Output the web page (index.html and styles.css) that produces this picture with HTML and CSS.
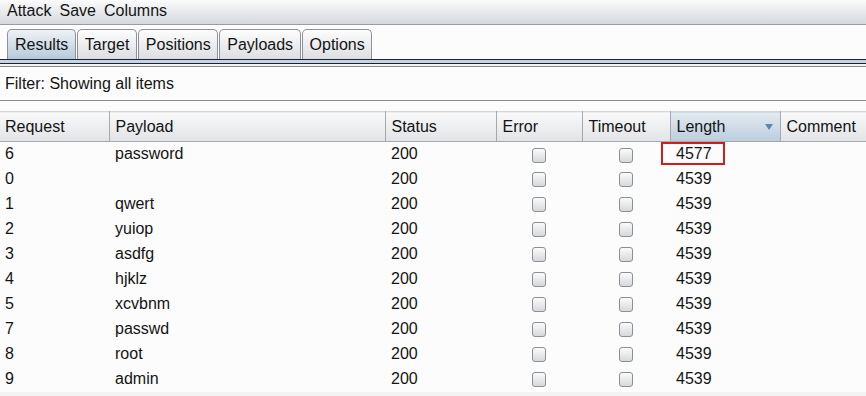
FILE: index.html
```html
<!DOCTYPE html>
<html lang="en">
<head>
    <meta charset="UTF-8">
    <title>Intruder attack - Results</title>
    <link rel="stylesheet" href="styles.css">
</head>
<body>
    <div id="menubar">
        <span class="menu-item">Attack</span>
        <span class="menu-item">Save</span>
        <span class="menu-item">Columns</span>
    </div>

    <div id="tab-area">
        <div id="tabs">
            <div class="tab selected">Results</div>
            <div class="tab">Target</div>
            <div class="tab">Positions</div>
            <div class="tab">Payloads</div>
            <div class="tab">Options</div>
        </div>
        <div id="tab-rule"></div>
    </div>

    <div id="filter">Filter: Showing all items</div>

    <div id="table-area">
        <table class="results">
            <colgroup>
                <col style="width: 109px">
                <col style="width: 276px">
                <col style="width: 111px">
                <col style="width: 86px">
                <col style="width: 88px">
                <col style="width: 110px">
                <col>
            </colgroup>
            <thead>
                <tr>
                    <th>Request</th>
                    <th>Payload</th>
                    <th>Status</th>
                    <th>Error</th>
                    <th>Timeout</th>
                    <th class="sorted"><div class="sort-head"><span>Length</span><span class="sort-arrow"></span></div></th>
                    <th>Comment</th>
                </tr>
            </thead>
            <tbody>
                <tr>
                    <td>6</td><td>password</td><td>200</td>
                    <td class="check"><span class="box"></span></td>
                    <td class="check"><span class="box"></span></td>
                    <td class="marked"><span class="highlight">4577</span></td><td></td>
                </tr>
                <tr>
                    <td>0</td><td></td><td>200</td>
                    <td class="check"><span class="box"></span></td>
                    <td class="check"><span class="box"></span></td>
                    <td>4539</td><td></td>
                </tr>
                <tr>
                    <td>1</td><td>qwert</td><td>200</td>
                    <td class="check"><span class="box"></span></td>
                    <td class="check"><span class="box"></span></td>
                    <td>4539</td><td></td>
                </tr>
                <tr>
                    <td>2</td><td>yuiop</td><td>200</td>
                    <td class="check"><span class="box"></span></td>
                    <td class="check"><span class="box"></span></td>
                    <td>4539</td><td></td>
                </tr>
                <tr>
                    <td>3</td><td>asdfg</td><td>200</td>
                    <td class="check"><span class="box"></span></td>
                    <td class="check"><span class="box"></span></td>
                    <td>4539</td><td></td>
                </tr>
                <tr>
                    <td>4</td><td>hjklz</td><td>200</td>
                    <td class="check"><span class="box"></span></td>
                    <td class="check"><span class="box"></span></td>
                    <td>4539</td><td></td>
                </tr>
                <tr>
                    <td>5</td><td>xcvbnm</td><td>200</td>
                    <td class="check"><span class="box"></span></td>
                    <td class="check"><span class="box"></span></td>
                    <td>4539</td><td></td>
                </tr>
                <tr>
                    <td>7</td><td>passwd</td><td>200</td>
                    <td class="check"><span class="box"></span></td>
                    <td class="check"><span class="box"></span></td>
                    <td>4539</td><td></td>
                </tr>
                <tr>
                    <td>8</td><td>root</td><td>200</td>
                    <td class="check"><span class="box"></span></td>
                    <td class="check"><span class="box"></span></td>
                    <td>4539</td><td></td>
                </tr>
                <tr>
                    <td>9</td><td>admin</td><td>200</td>
                    <td class="check"><span class="box"></span></td>
                    <td class="check"><span class="box"></span></td>
                    <td>4539</td><td></td>
                </tr>
            </tbody>
        </table>
    </div>
</body>
</html>
```

FILE: styles.css
```css
* {
    margin: 0;
    padding: 0;
    box-sizing: border-box;
}

body {
    width: 866px;
    height: 396px;
    overflow: hidden;
    background-color: #f3f3f3;
    font-family: "Liberation Sans", Arial, sans-serif;
    font-size: 16px;
    color: #141414;
}

/* menu bar */
#menubar {
    height: 25px;
    display: flex;
    align-items: center;
    padding: 0 0 2px 3px;
    background: linear-gradient(#fbfbfc, #d5d8dd);
    border-bottom: 1px solid #999ca2;
}

.menu-item {
    padding: 0 4px;
}

/* tabs */
#tab-area {
    background-color: #fcfcfc;
    padding-top: 4px;
}

#tabs {
    display: flex;
    padding-left: 7px;
    height: 30px;
}

.tab {
    display: flex;
    align-items: center;
    padding: 0 6.5px 0 7px;
    margin-right: 1px;
    background: linear-gradient(#fdfdfd, #dcdee2);
    border: 1px solid #8e9298;
    border-bottom: none;
    border-radius: 5px 5px 0 0;
}

.tab.selected {
    background: linear-gradient(#eef2f6, #b7cadb);
}

#tab-rule {
    height: 5px;
    background-color: #c6d5e4;
    border-top: 1px solid #1c2231;
    border-bottom: 1px solid #1c2231;
}

/* filter line */
#filter {
    height: 35px;
    margin-top: 2px;
    padding-left: 5px;
    display: flex;
    align-items: center;
    background-color: #fcfcfc;
    border-top: 1px solid #8d8d8d;
    border-bottom: 1px solid #8d8d8d;
}

/* results table */
#table-area {
    background-color: #fcfcfc;
    padding-top: 10px;
}

.results {
    width: 866px;
    table-layout: fixed;
    border-collapse: collapse;
}

.results th {
    height: 30px;
    padding: 0 5px 0 6px;
    text-align: left;
    font-weight: normal;
    background: linear-gradient(#f9f9fa, #e1e3e6);
    border-top: 1px solid #d3d5d8;
    border-bottom: 1px solid #a5a8ad;
    border-right: 1px solid #a5a8ad;
}

.results th:first-child,
.results td:first-child {
    padding-left: 5px;
}

.results th:last-child {
    border-right: none;
}

.results th.sorted {
    background: linear-gradient(#e3eaf1, #bccddd);
}

.sort-head {
    display: flex;
    justify-content: space-between;
    align-items: center;
}

.sort-arrow {
    width: 0;
    height: 0;
    margin-right: 2px;
    border-left: 4px solid transparent;
    border-right: 4px solid transparent;
    border-top: 6px solid #5f84ad;
}

.results td {
    height: 25px;
    padding: 0 5px 0 6px;
    white-space: nowrap;
    background-color: #fcfcfc;
}

.results td.check {
    text-align: center;
    padding: 0;
}

.box {
    display: inline-block;
    width: 14px;
    height: 15px;
    vertical-align: middle;
    border: 1px solid #8b9095;
    border-radius: 3px;
    background: linear-gradient(#fbfbfb, #d6d8db);
}

.results td.marked {
    padding: 0;
    vertical-align: top;
}

.highlight {
    display: block;
    width: 64px;
    height: 23px;
    margin-left: -9px;
    padding-left: 13px;
    line-height: 20px;
    border: 2px solid #d11d1d;
}
```
